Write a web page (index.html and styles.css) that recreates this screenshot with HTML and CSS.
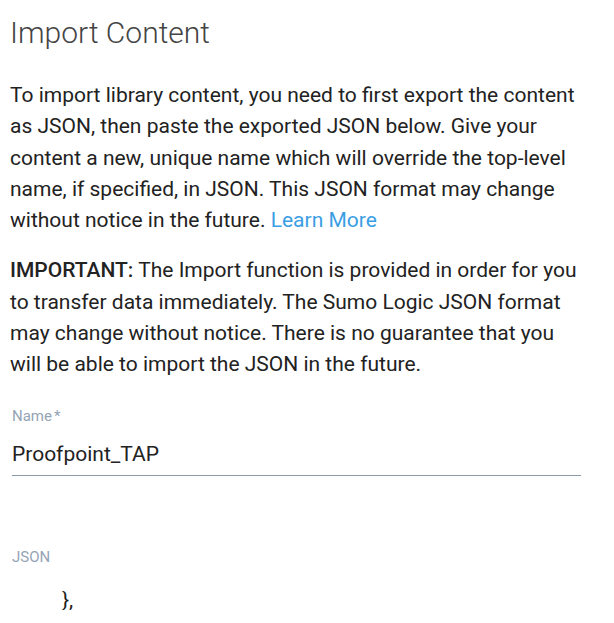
FILE: index.html
```html
<!DOCTYPE html>
<html lang="en">
<head>
  <meta charset="UTF-8">
  <title>Import Content</title>
  <link rel="stylesheet" href="styles.css">
</head>
<body>
  <div class="import-panel">
    <h1 class="import-title">Import Content</h1>

    <p class="import-text">
      To import library content, you need to first export the content as JSON, then paste the exported JSON below. Give your content a new, unique name which will override the top-level name, if specified, in JSON. This JSON format may change without notice in the future. <a href="#" class="learn-more">Learn More</a>
    </p>

    <p class="import-text">
      <strong>IMPORTANT:</strong> The Import function is provided in order for you to transfer data immediately. The Sumo Logic JSON format may change without notice. There is no guarantee that you will be able to import the JSON in the future.
    </p>

    <div class="field">
      <label class="field-label" for="name">Name<span class="req">*</span></label>
      <input id="name" class="field-input" type="text" value="Proofpoint_TAP">
    </div>

    <div class="field field-json">
      <div class="field-label">JSON</div>
      <div class="json-body">},</div>
    </div>
  </div>
</body>
</html>
```

FILE: styles.css
```css
body {
  margin: 0;
  font-family: Roboto, 'Liberation Sans', sans-serif;
  background-color: #fff;
  color: #222;
}

.import-panel {
  width: 571px;
  padding: 0 0 0 10px;
}

.import-title {
  font-size: 30px;
  font-weight: 300;
  color: #444;
  margin: 15px 0 0;
  line-height: 36px;
}

.import-text {
  font-size: 21px;
  line-height: 31.3px;
  margin: 29px 0 0;
}

.import-text + .import-text {
  margin-top: 19px;
}

.import-text strong {
  font-weight: 500;
}

.learn-more {
  color: #3a9ee4;
  text-decoration: none;
}

.field {
  margin-top: 26px;
  padding-left: 2px;
}

.field-label {
  display: block;
  font-size: 15px;
  color: #94a4b6;
  line-height: 18px;
}

.req {
  margin-left: 2px;
}

.field-input {
  display: block;
  width: 100%;
  box-sizing: border-box;
  border: none;
  border-bottom: 1px solid #8a9aa8;
  font-family: inherit;
  font-size: 21px;
  color: #222;
  padding: 17px 0 9px;
  outline: none;
}

.field-json {
  margin-top: 72px;
}

.json-body {
  font-size: 21px;
  margin-top: 22px;
  padding-left: 50px;
}
```
